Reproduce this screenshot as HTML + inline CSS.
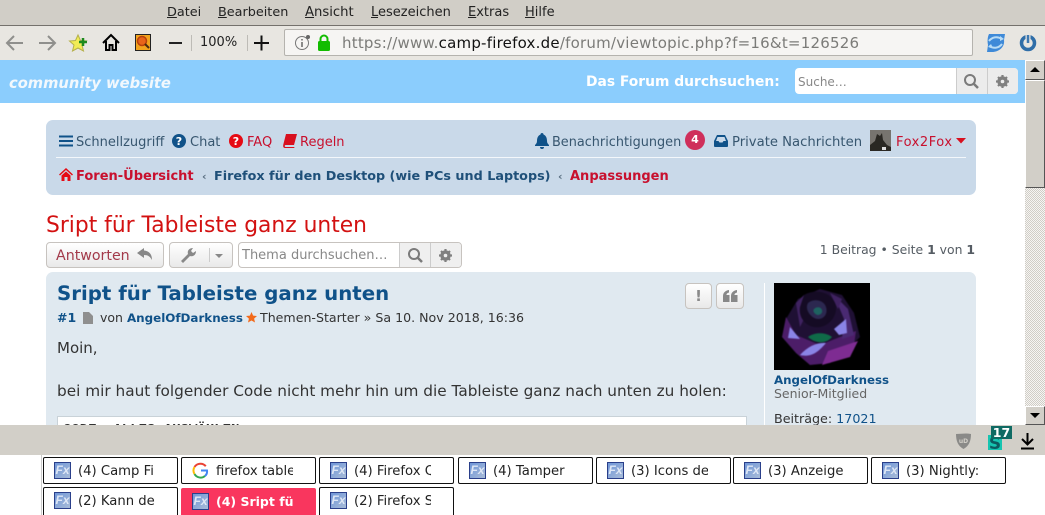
<!DOCTYPE html>
<html lang="de"><head><meta charset="utf-8"><style>
html,body{margin:0;padding:0;width:1045px;height:515px;overflow:hidden;background:#fff}
body{position:relative;font-family:"DejaVu Sans","Liberation Sans",sans-serif;font-size:13px;color:#333}
.a,.t{position:absolute}
.t{white-space:nowrap;line-height:16px}
svg{position:absolute;overflow:visible}
u{text-decoration:underline}
.tab{position:absolute;width:133px;height:25px;border:1px solid #111;border-radius:2px;background:#fff;overflow:hidden}
.tab b{position:absolute;left:10px;top:4px;width:17px;height:17px;background:linear-gradient(135deg,#6f96d8,#a9bcd8);border:1px solid #2a3f8a;box-sizing:border-box;color:#dfe7f5;font:italic bold 12px/15px "Liberation Sans",sans-serif;text-align:center}
.tab span{position:absolute;left:34px;top:5px;width:77px;overflow:hidden;white-space:nowrap;font-size:13.2px;line-height:17px;color:#222}
.btn{position:absolute;box-sizing:border-box;border:1px solid #c7c3bf;border-radius:4px;background:linear-gradient(#fff,#e9e9e9)}
</style></head><body>

<!-- menu bar -->
<div class="a" style="left:0;top:0;width:1045px;height:25px;background:#d1cec7"></div>
<div class="a" style="left:0;top:25px;width:1045px;height:1px;background:#74716c"></div>
<div class="t" style="left:167px;top:5px;color:#222;font-size:12.800px"><u>D</u>atei</div>
<div class="t" style="left:218px;top:5px;color:#222;font-size:12.800px"><u>B</u>earbeiten</div>
<div class="t" style="left:305px;top:5px;color:#222;font-size:13.200px"><u>A</u>nsicht</div>
<div class="t" style="left:371px;top:5px;color:#222"><u>L</u>esezeichen</div>
<div class="t" style="left:468px;top:5px;color:#222"><u>E</u>xtras</div>
<div class="t" style="left:525px;top:5px;color:#222"><u>H</u>ilfe</div>

<!-- toolbar -->
<div class="a" style="left:0;top:26px;width:1045px;height:34px;background:#e8e6e1"></div>
<svg style="left:0;top:26px" width="1045" height="34" fill="none">
<path d="M23 17H7M14 10l-7 7 7 7" stroke="#8f8f8c" stroke-width="2"/>
<path d="M39 17h16M48 10l7 7-7 7" stroke="#8f8f8c" stroke-width="2"/>
<path d="M78 9l2.500 5.500 6 .5-4.500 4 1.500 6-5.500-3-5.500 3 1.500-6-4.500-4 6-.5z" fill="#f1ec55" stroke="#b5b04a"/>
<path d="M83 12v8M79 16h8" stroke="#1d8a1d" stroke-width="2.500"/>
<path d="M103 17l8-8 8 8M106 15v9h3.500v-5h3v5h3.500v-9" stroke="#000" stroke-width="2"/>
<rect x="135.500" y="8.500" width="15" height="16" fill="#f2a31d" stroke="#222"/>
<circle cx="142" cy="15" r="4.500" fill="#e8641a" stroke="#b8410c" stroke-width="1.500"/>
<path d="M145 18l4 4" stroke="#4a2a10" stroke-width="2"/>
<path d="M169 17h13" stroke="#222" stroke-width="2"/>
<path d="M191.500 9v16M247.500 9v16" stroke="#bdbbb6"/>
<path d="M254 17h15M261.500 9.500v15" stroke="#111" stroke-width="2"/>
</svg>
<div class="t" style="left:200px;top:35px;color:#222;font-size:13px">100%</div>
<div class="a" style="left:284px;top:29px;width:689px;height:27px;box-sizing:border-box;background:#f6f5f3;border:1px solid #b5b3ae;border-radius:2px"></div>
<svg style="left:294px;top:34px" width="40" height="18" fill="none">
<circle cx="8" cy="9" r="6.500" stroke="#777"/>
<path d="M8 8v5M8 5v1.500" stroke="#666" stroke-width="1.500"/>
<circle cx="14" cy="3" r="2" fill="#666"/>
<rect x="24" y="7" width="12" height="10" rx="1.500" fill="#12bc00"/>
<path d="M26.500 8V5a3.500 3.500 0 017 0v3" stroke="#12bc00" stroke-width="2"/>
</svg>
<div class="t" style="left:342px;top:35px;font-size:15px;color:#7b7b78;letter-spacing:.22px">https://www.<span style="color:#111">camp-firefox.de</span>/forum/viewtopic.php?f=16&amp;t=126526</div>
<svg style="left:986px;top:33px" width="20" height="20" fill="none">
<path d="M3 1h16l-1 6c1 7-5 12-12 12H1l1-7C1 7 2 3 3 1z" fill="#3f8ad8"/>
<path d="M3 8c3-4 8-5 13-2M16 11c-3 4-8 5-13 2" stroke="#b9dcf5" stroke-width="2"/>
<path d="M14 3l4 3-4 2zM5 11l-3 3 5 1z" fill="#b9dcf5"/>
</svg>
<svg style="left:1019px;top:33px" width="19" height="19" fill="none">
<circle cx="9" cy="10" r="6.500" stroke="#2f6ea8" stroke-width="3.500"/>
<path d="M9 1v9" stroke="#e8e6e1" stroke-width="5"/>
<path d="M9 2v8" stroke="#3d78b0" stroke-width="2.500"/>
</svg>

<!-- site header -->
<div class="a" style="left:0;top:60px;width:1025px;height:43px;background:#8bcdfd"></div>
<div class="t" style="left:9px;top:76px;font:italic bold 14.700px/16px 'DejaVu Sans',sans-serif;color:#f2f8fd">community website</div>
<div class="t" style="left:586px;top:74px;font-weight:bold;color:#fff;font-size:13.850px">Das Forum durchsuchen:</div>
<div class="a" style="left:795px;top:68px;width:223px;height:26px;background:#fff;border-radius:4px;overflow:hidden">
<div class="a" style="left:161px;top:0;width:31px;height:26px;background:#ececec;border-left:1px solid #ccc;box-sizing:border-box"></div>
<div class="a" style="left:192px;top:0;width:31px;height:26px;background:#ececec;border-left:1px solid #ccc;box-sizing:border-box"></div>
<div class="t" style="left:3px;top:6px;font-size:12px;color:#888">Suche…</div>
<svg style="left:168px;top:5px" width="16" height="16" fill="none"><circle cx="7" cy="7" r="5" stroke="#7b7b7b" stroke-width="2"/><path d="M11 11l4 4" stroke="#7b7b7b" stroke-width="2.500"/></svg>
<svg style="left:201px;top:7px" width="13" height="13"><circle cx="6.500" cy="6.500" r="3.500" fill="none" stroke="#808080" stroke-width="3.500"/><path d="M6.500 0v13M0 6.500h13M2 2l9 9M11 2L2 11" stroke="#808080" stroke-width="2.200"/><circle cx="6.500" cy="6.500" r="1.800" fill="#ececec"/></svg>
</div>

<!-- scrollbar -->
<div class="a" style="left:1025px;top:60px;width:20px;height:365px;background-color:#e6e4e0;background-image:repeating-conic-gradient(#d0cdc6 0 25%,#f6f5f3 0 50%);background-size:2px 2px"></div>
<div class="a" style="left:1025px;top:60px;width:18px;height:18px;background:#d2cfc8;border:1px solid;border-color:#fff #555 #555 #fff"></div>
<div class="a" style="left:1025px;top:80px;width:18px;height:106px;background:#d2cfc8;border:1px solid;border-color:#fff #555 #555 #fff"></div>
<div class="a" style="left:1025px;top:406px;width:18px;height:17px;background:#d2cfc8;border:1px solid;border-color:#fff #555 #555 #fff"></div>
<svg style="left:1025px;top:60px" width="20" height="365"><path d="M5 12l5-5 5 5z M5 353l5 5 5-5z" fill="#000"/></svg>

<!-- nav panel -->
<div class="a" style="left:46px;top:120px;width:930px;height:75px;background:#c9d9e9;border-radius:7px"></div>
<div class="a" style="left:56px;top:157px;width:910px;height:1px;background:#f3f7fb"></div>
<svg style="left:59px;top:135px" width="14" height="12"><path d="M0 1.500h14M0 6h14M0 10.500h14" stroke="#105289" stroke-width="2"/></svg>
<div class="t" style="left:76px;top:135px;color:#37566f">Schnellzugriff</div>
<svg style="left:172px;top:134px" width="14" height="14"><circle cx="7" cy="7" r="7" fill="#105289"/><text x="7" y="11" font-size="11" font-weight="bold" fill="#fff" text-anchor="middle" font-family="DejaVu Sans">?</text></svg>
<div class="t" style="left:190px;top:135px;color:#37566f">Chat</div>
<svg style="left:229px;top:134px" width="14" height="14"><circle cx="7" cy="7" r="7" fill="#e60a14"/><text x="7" y="11" font-size="11" font-weight="bold" fill="#fff" text-anchor="middle" font-family="DejaVu Sans">?</text></svg>
<div class="t" style="left:247px;top:135px;color:#c8102e">FAQ</div>
<svg style="left:283px;top:134px" width="14" height="14"><path d="M3 0h11l-3 11H2.500C1.500 11 1.500 13 2.500 13h9l-.3 1H2C0 14 0 12 .3 10.500z" fill="#d8101f"/></svg>
<div class="t" style="left:300px;top:135px;color:#c8102e">Regeln</div>

<svg style="left:534px;top:133px" width="16" height="16"><path d="M8 0c1 0 1.500.7 1.500 1.500C12 2.500 13 5 13 8c0 2 1 3 2 4v1H1v-1c1-1 2-2 2-4 0-3 1-5.500 3.500-6.500C6.500.7 7 0 8 0zM6 14h4a2 2 0 01-4 0z" fill="#105289"/></svg>
<div class="t" style="left:552px;top:135px;color:#37566f;font-size:12.850px">Benachrichtigungen</div>
<div class="a" style="left:685px;top:130px;width:20px;height:20px;border-radius:50%;background:#cf2f5b;color:#fff;font:bold 11px/20px 'DejaVu Sans',sans-serif;text-align:center">4</div>
<svg style="left:714px;top:135px" width="14" height="12"><path d="M3 0h8l3 6v5a1 1 0 01-1 1H1a1 1 0 01-1-1V6z" fill="#105289"/><path d="M3.500 2h7l1.500 4H9.500l-1 1.500h-3l-1-1.500H2z" fill="#c9d9e9"/></svg>
<div class="t" style="left:732px;top:135px;color:#37566f;font-size:13.200px">Private Nachrichten</div>
<svg style="left:870px;top:130px" width="21" height="21"><rect width="21" height="21" fill="#77746f"/><path d="M0 21V15l5-4 2-7 3 2 2-3 1 7 4 5 4 2v4z" fill="#2a2823"/><rect x="12" y="17" width="4" height="3" fill="#ddd"/></svg>
<div class="t" style="left:896px;top:135px;color:#c8102e;letter-spacing:.55px">Fox2Fox</div>
<svg style="left:956px;top:138px" width="10" height="6"><path d="M0 0h10L5 5.500z" fill="#d8101f"/></svg>

<svg style="left:59px;top:168px" width="14" height="13"><path d="M7 0l7 6.500-1 1L7 2 1 7.500l-1-1zM2.500 7.500L7 3.500l4.500 4V13H8.500V9h-3v4h-3z" fill="#e60a14"/></svg>
<div class="t" style="left:76px;top:169px;font-weight:bold;color:#c8102e">Foren-Übersicht</div>
<div class="t" style="left:202px;top:169px;font-size:11px;color:#5b7083;font-weight:bold">‹</div>
<div class="t" style="left:214px;top:169px;font-weight:bold;color:#1f5079;font-size:12.770px">Firefox für den Desktop (wie PCs und Laptops)</div>
<div class="t" style="left:558px;top:169px;font-size:11px;color:#5b7083;font-weight:bold">‹</div>
<div class="t" style="left:570px;top:169px;font-weight:bold;color:#c8102e">Anpassungen</div>

<!-- title -->
<div class="t" style="left:46px;top:214px;font-size:21.800px;line-height:24px;color:#d31111">Sript für Tableiste ganz unten</div>

<!-- action bar -->
<div class="btn" style="left:46px;top:242px;width:118px;height:26px"></div>
<div class="t" style="left:56px;top:248px;font-size:14.200px;color:#a33a4a">Antworten</div>
<svg style="left:137px;top:248px" width="16" height="13"><path d="M7 0L0 5l7 5V7c4 0 6 1.500 8 5 0-6-3-9-8-9.500z" fill="#888"/></svg>
<div class="btn" style="left:169px;top:242px;width:64px;height:26px"></div>
<svg style="left:180px;top:247px" width="50" height="16"><path d="M1 14l7-7c-1-3 1-6 5-6l-2 3 2 2 3-2c0 4-3 6-6 5l-7 7z" fill="#888"/><path d="M29.500 1v14" stroke="#ccc"/><path d="M35 7h8l-4 4z" fill="#888"/></svg>
<div class="a" style="left:238px;top:242px;width:224px;height:26px;box-sizing:border-box;background:#fff;border:1px solid #c7c3bf;border-radius:4px;overflow:hidden">
<div class="a" style="left:160px;top:0;width:32px;height:24px;background:#efefef;border-left:1px solid #ccc;box-sizing:border-box"></div>
<div class="a" style="left:191px;top:0;width:31px;height:24px;background:#efefef;border-left:1px solid #ccc;box-sizing:border-box"></div>
<div class="t" style="left:3px;top:5px;font-size:13px;color:#888">Thema durchsuchen…</div>
<svg style="left:168px;top:4px" width="16" height="16" fill="none"><circle cx="7" cy="7" r="5" stroke="#7b7b7b" stroke-width="2"/><path d="M11 11l4 4" stroke="#7b7b7b" stroke-width="2.500"/></svg>
<svg style="left:200px;top:6px" width="13" height="13"><circle cx="6.500" cy="6.500" r="3.500" fill="none" stroke="#808080" stroke-width="3.500"/><path d="M6.500 0v13M0 6.500h13M2 2l9 9M11 2L2 11" stroke="#808080" stroke-width="2.200"/><circle cx="6.500" cy="6.500" r="1.800" fill="#efefef"/></svg>
</div>
<div class="t" style="right:70px;top:242px;font-size:12.400px;color:#555c63">1 Beitrag • Seite <b>1</b> von <b>1</b></div>

<!-- post -->
<div class="a" style="left:46px;top:272px;width:930px;height:170px;background:#e0e9f0;border-radius:7px"></div>
<div class="a" style="left:764px;top:283px;width:1px;height:150px;background:#fff"></div>
<div class="t" style="left:57px;top:281px;font-size:19.750px;line-height:25px;font-weight:bold;color:#105289">Sript für Tableiste ganz unten</div>
<div class="btn" style="left:685px;top:283px;width:27px;height:26px"></div>
<div class="t" style="left:685px;top:288px;width:27px;text-align:center;font-weight:bold;font-size:15px;color:#8a8a8a">!</div>
<div class="btn" style="left:716px;top:283px;width:28px;height:26px"></div>
<svg style="left:723px;top:290px" width="15" height="12"><path d="M0 12V6C0 3 2 .5 6 0v2.500C4 3 3.500 4 3.500 5H6.500v7zM8 12V6c0-3 2-5.500 6-6v2.500c-2 .5-2.500 1.500-2.500 2.500h3v7z" fill="#888"/></svg>

<div class="t" style="left:57px;top:310px;font-size:12.500px;font-weight:bold;color:#105289">#1</div>
<svg style="left:83px;top:312px" width="10" height="12"><path d="M0 0h6l4 4v8H0z" fill="#8f8f8f"/></svg>
<div class="t" style="left:100px;top:310px;font-size:12.500px;color:#333">von <b style="color:#105289;font-size:11.900px">AngelOfDarkness</b></div>
<svg style="left:246px;top:312px" width="11" height="11"><path d="M5.500 0l1.600 3.600 3.900.4-2.900 2.600.9 3.900-3.500-2-3.500 2 .9-3.900L0 4l3.900-.4z" fill="#f26a1b"/></svg>
<div class="t" style="left:260px;top:310px;font-size:12.600px;color:#333">Themen-Starter » Sa 10. Nov 2018, 16:36</div>
<div class="t" style="left:57px;top:340px;font-size:15px;color:#333">Moin,</div>
<div class="t" style="left:57px;top:383px;font-size:15.300px;color:#333">bei mir haut folgender Code nicht mehr hin um die Tableiste ganz nach unten zu holen:</div>
<div class="a" style="left:57px;top:416px;width:690px;height:20px;box-sizing:border-box;background:#fff;border:1px solid #c9d2d8;overflow:hidden">
<div class="t" style="left:5px;top:6px;font:bold 14px/14px 'Liberation Mono',monospace;color:#333">CODE: ALLES AUSWÄHLEN</div></div>

<!-- avatar -->
<svg style="left:774px;top:283px" width="96" height="87">
<rect width="96" height="87" fill="#000"/>
<g style="filter:blur(.6px)">
<path d="M24 16l22-10 22 6 12 18 6 24-14 14-26 12-18-6-14-14-2-24z" fill="#1f1034"/>
<path d="M12 34l10 18 24 10 20-8 16-6-2 14-24 18-20 2-14-12-14-16z" fill="#4c1d68"/>
<path d="M60 12l14 14 6 26-12 4 2-20z" fill="#4a2a72"/>
<path d="M22 20l8-8 2 20-6 12zM56 10l12 6-4 10z" fill="#3f2260"/>
<path d="M30 12c10-6 24-4 30 6s-2 24-14 26-22-8-20-20z" fill="#150b24"/>
<path d="M34 20c6-5 16-3 18 4s-2 12-8 12-14-9-10-16z" fill="#2c2850"/>
<path d="M40 26c3-3 7-2 8 1s-2 5-4 5-6-3-4-6z" fill="#1e6260"/>
<path d="M34 54c6-5 18-5 24 0-6 7-16 7-24 0z" fill="#0f6a48"/>
<path d="M16 44l10 12-12-1zM60 46l12-10 1 14-8 2zM26 72c8-9 18-13 26-12-7 8-14 15-26 12z" fill="#8a84e6"/>
<path d="M54 68l30-10-8 16-28 8z" fill="#7e2c92"/>
</g>
</svg>
<div class="t" style="left:774px;top:372px;font-size:11.800px;font-weight:bold;color:#105289">AngelOfDarkness</div>
<div class="t" style="left:774px;top:386px;font-size:12.500px;color:#666">Senior-Mitglied</div>
<div class="t" style="left:774px;top:411px;font-size:12.700px;color:#333">Beiträge: <span style="color:#105289">17021</span></div>

<!-- bottom bar -->
<div class="a" style="left:0;top:425px;width:1045px;height:30px;background:#d2cfc8"></div>
<svg style="left:955px;top:433px" width="17" height="17"><path d="M1 1c5 0 10-1 15 0 0 7-2 12-7.500 15C3 13 1 8 1 1z" fill="#8a8a88"/><text x="8.500" y="10" font-size="6" font-weight="bold" fill="#d2cfc8" text-anchor="middle" font-family="DejaVu Sans">uD</text></svg>
<svg style="left:988px;top:425px" width="25" height="25">
<rect x="0" y="10" width="14" height="15" fill="#16c4b0"/>
<text x="7" y="24" font-size="17" font-weight="bold" fill="#0c5a60" text-anchor="middle" font-family="DejaVu Sans">S</text>
<rect x="3" y="1" width="21" height="13" fill="#0f6a63"/>
<text x="13.500" y="12" font-size="12.500" font-weight="bold" fill="#fff" text-anchor="middle" font-family="DejaVu Sans">17</text>
</svg>
<svg style="left:1020px;top:433px" width="15" height="17" fill="none"><path d="M7.500 0v11M2 6l5.500 5.500L13 6" stroke="#000" stroke-width="2"/><path d="M1 15.500h13" stroke="#000" stroke-width="2"/></svg>

<!-- tab area -->
<div class="a" style="left:41px;top:455px;width:1px;height:60px;background:#ccc"></div>
<div class="tab" style="left:43px;top:457px"><b>Fx</b><span>(4) Camp Fi</span></div>
<div class="tab" style="left:181px;top:457px"><svg style="left:11px;top:5px" width="15" height="15" viewBox="0 0 15 15" fill="none"><path d="M12.800 3.200A7 7 0 001.500 4" stroke="#ea4335" stroke-width="2"/><path d="M1.500 4a6.800 6.800 0 000 7" stroke="#fbbc05" stroke-width="2"/><path d="M1.500 11a7 7 0 0010.500 2" stroke="#34a853" stroke-width="2"/><path d="M12 13a6 6 0 002-5.500H8" stroke="#4285f4" stroke-width="2"/></svg><span>firefox table</span></div>
<div class="tab" style="left:319px;top:457px"><b>Fx</b><span>(4) Firefox Q</span></div>
<div class="tab" style="left:458px;top:457px"><b>Fx</b><span>(4) Tamper</span></div>
<div class="tab" style="left:596px;top:457px"><b>Fx</b><span>(3) Icons de</span></div>
<div class="tab" style="left:733px;top:457px"><b>Fx</b><span>(3) Anzeige</span></div>
<div class="tab" style="left:871px;top:457px"><b>Fx</b><span>(3) Nightly:</span></div>
<div class="tab" style="left:43px;top:487px;height:28px"><b>Fx</b><span>(2) Kann de</span></div>
<div class="tab" style="left:181px;top:488px;height:27px;background:#f9365e;border:1px solid #f9365e"><b>Fx</b><span style="color:#fff;font-weight:bold;font-size:12.500px;width:77px;top:4px">(4) Sript für</span></div>
<div class="tab" style="left:319px;top:487px;height:28px"><b>Fx</b><span>(2) Firefox S</span></div>
</body></html>
